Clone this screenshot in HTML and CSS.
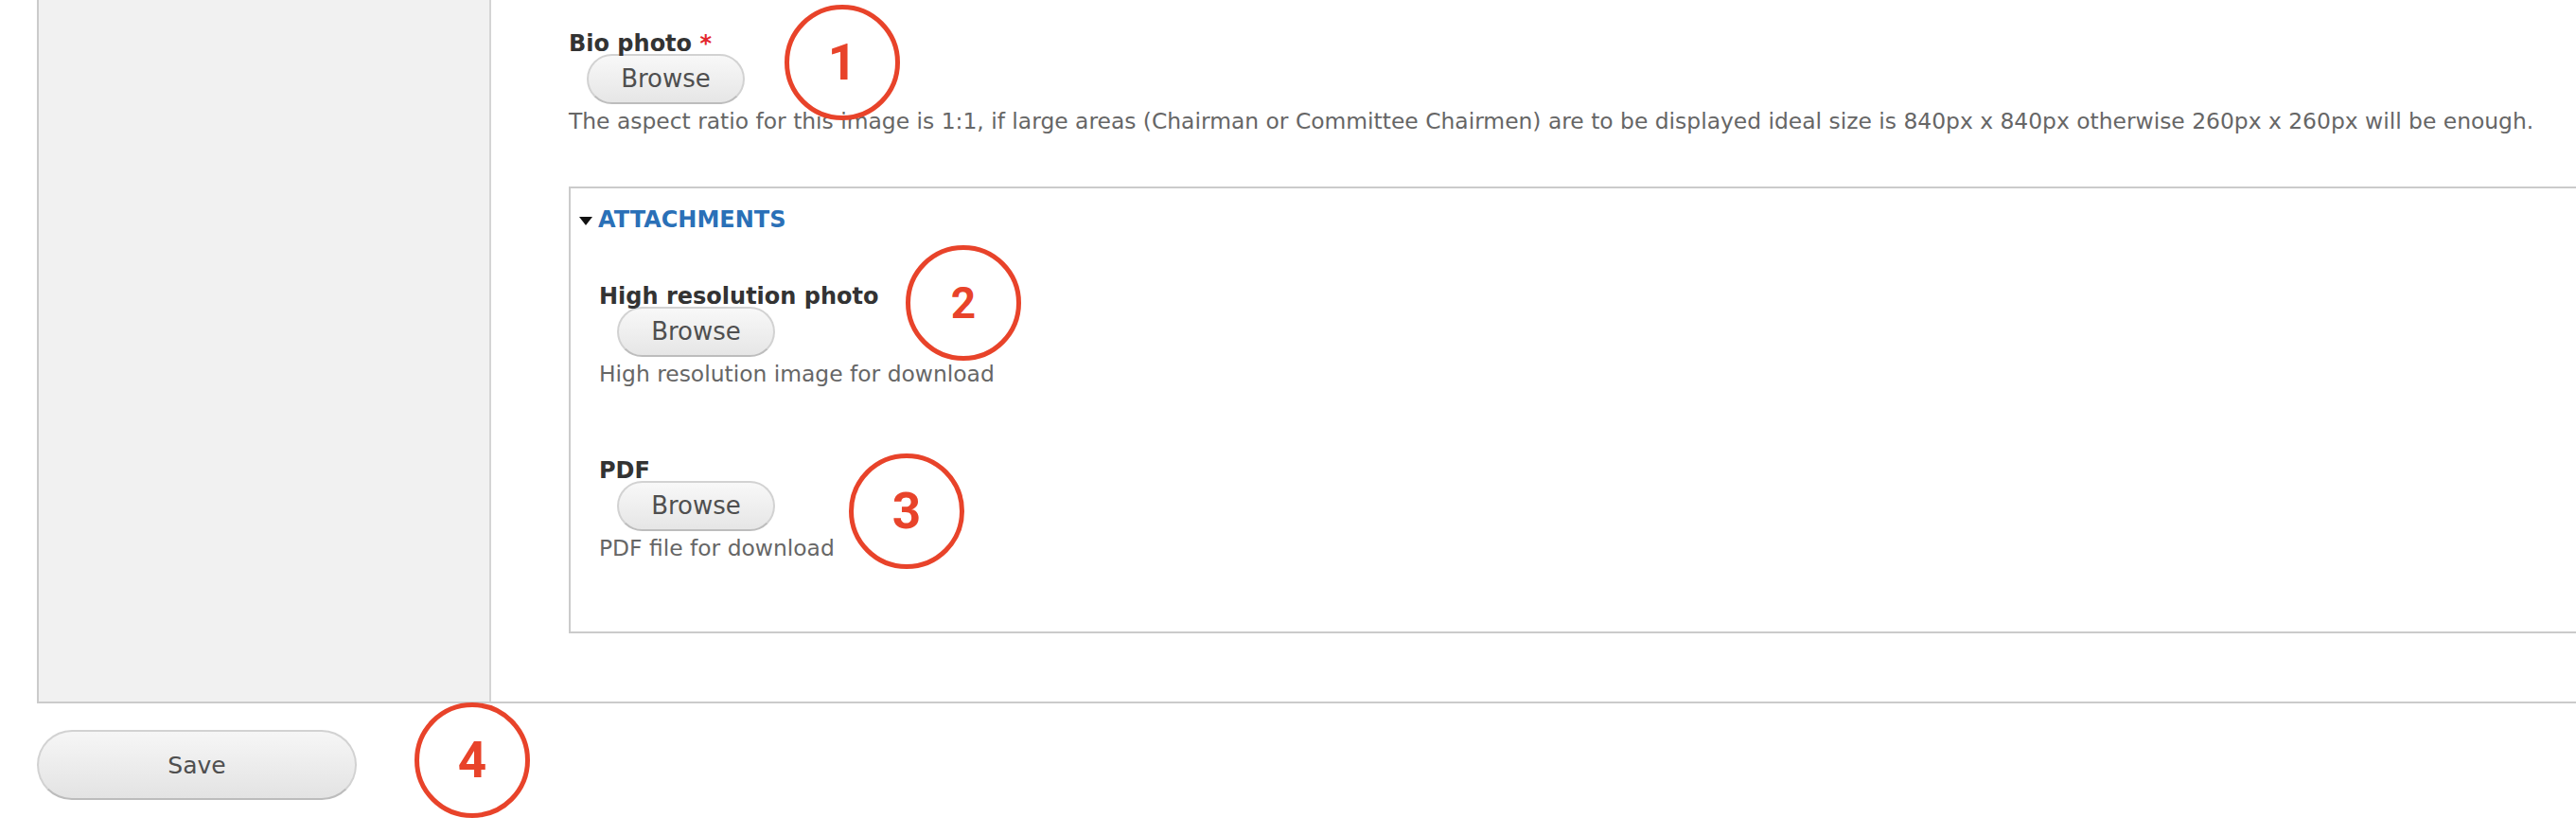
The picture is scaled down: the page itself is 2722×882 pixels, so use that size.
FILE: index.html
```html
<!DOCTYPE html>
<html lang="en">
<head>
<meta charset="utf-8">
<title>Bio photo form</title>
<link rel="stylesheet" href="styles.css">
</head>
<body>
<div class="page">
  <div class="vtabs">
    <div class="vtabs-list"></div>
    <div class="vtabs-pane">
      <div class="form-item item-bio">
        <label class="label">Bio photo <span class="req">*</span></label>
        <button class="browse" type="button">Browse</button>
        <div class="desc">The aspect ratio for this image is 1:1, if large areas (Chairman or Committee Chairmen) are to be displayed ideal size is 840px x 840px otherwise 260px x 260px will be enough.</div>
      </div>
      <div class="fieldset">
        <div class="legend"><span class="tri"></span><span class="legend-text">ATTACHMENTS</span></div>
        <div class="form-item item-hires">
          <label class="label">High resolution photo</label>
          <button class="browse" type="button">Browse</button>
          <div class="desc">High resolution image for download</div>
        </div>
        <div class="form-item item-pdf">
          <label class="label">PDF</label>
          <button class="browse" type="button">Browse</button>
          <div class="desc">PDF file for download</div>
        </div>
      </div>
    </div>
  </div>
  <div class="actions">
    <button class="save" type="button">Save</button>
  </div>

  <span class="mark mark-1">1</span>
  <span class="mark mark-2">2</span>
  <span class="mark mark-3">3</span>
  <span class="mark mark-4">4</span>
</div>
</body>
</html>
```

FILE: styles.css
```css
html, body {
  margin: 0;
  padding: 0;
  background: #ffffff;
  overflow: hidden;
}

body {
  font-family: "DejaVu Sans", "Noto Sans", sans-serif;
  color: #333333;
}

.page {
  position: relative;
  width: 2722px;
  height: 882px;
  overflow: hidden;
}

/* vertical tabs container */
.vtabs {
  display: flex;
  margin: 0 -120px 0 39px;
  border-left: 2px solid #cbcbcb;
  border-bottom: 2px solid #cbcbcb;
}

.vtabs-list {
  flex: 0 0 476px;
  background: #f1f1f1;
  border-right: 2px solid #d4d4d4;
}

.vtabs-pane {
  flex: 1 1 auto;
  padding: 36px 0 72px 82px;
}

/* form items */
.label {
  display: block;
  font-size: 24px;
  font-weight: bold;
  line-height: 21px;
  color: #333333;
}

.req {
  color: #e3262d;
  font-weight: bold;
}

.browse {
  display: block;
  box-sizing: border-box;
  height: 53px;
  width: 167px;
  margin: 0 0 0 19px;
  padding: 0;
  border: 2px solid #d2d2d2;
  border-bottom-color: #bdbdbd;
  border-radius: 27px;
  background: linear-gradient(#f8f8f8, #e6e6e6);
  font-family: "DejaVu Sans", "Noto Sans", sans-serif;
  font-size: 26px;
  color: #4f4f4f;
  line-height: 49px;
  text-align: center;
}

.desc {
  margin-top: 3px;
  font-size: 23.4px;
  line-height: 30px;
  color: #666666;
  white-space: nowrap;
}

/* fieldset */
.fieldset {
  margin-top: 54px;
  border: 2px solid #cbcbcb;
  border-right: none;
  padding: 18px 0 73px 9px;
}

.legend {
  display: flex;
  align-items: center;
  height: 30px;
  gap: 6px;
}

.tri {
  width: 0;
  height: 0;
  margin-top: 2px;
  border-left: 7px solid transparent;
  border-right: 7px solid transparent;
  border-top: 9px solid #111111;
}

.legend-text {
  font-size: 24px;
  font-weight: bold;
  line-height: 30px;
  color: #2a70b7;
}

.fieldset .form-item {
  padding-left: 21px;
}

.item-hires {
  margin-top: 56px;
}

.item-pdf {
  margin-top: 77px;
}

/* actions */
.actions {
  padding: 28px 0 0 39px;
}

.save {
  display: block;
  box-sizing: border-box;
  width: 338px;
  height: 74px;
  padding: 0;
  border: 2px solid #d2d2d2;
  border-bottom-color: #bcbcbc;
  border-radius: 37px;
  background: linear-gradient(#f6f6f6, #e3e3e3);
  font-family: "DejaVu Sans", "Noto Sans", sans-serif;
  font-size: 25px;
  color: #4f4f4f;
  text-align: center;
}

/* annotation circles */
.mark {
  position: absolute;
  box-sizing: border-box;
  width: 122px;
  height: 122px;
  border: 5px solid #e8432a;
  border-radius: 50%;
  display: flex;
  align-items: center;
  justify-content: center;
  font-family: Roboto, "Liberation Sans", sans-serif;
  font-weight: 700;
  font-size: 53px;
  line-height: 1;
  color: #e8432a;
}

.mark-1 { left: 829px; top: 5px; }
.mark-2 { left: 957px; top: 259px; font-size: 46px; }
.mark-3 { left: 897px; top: 479px; }
.mark-4 { left: 438px; top: 742px; }
```
